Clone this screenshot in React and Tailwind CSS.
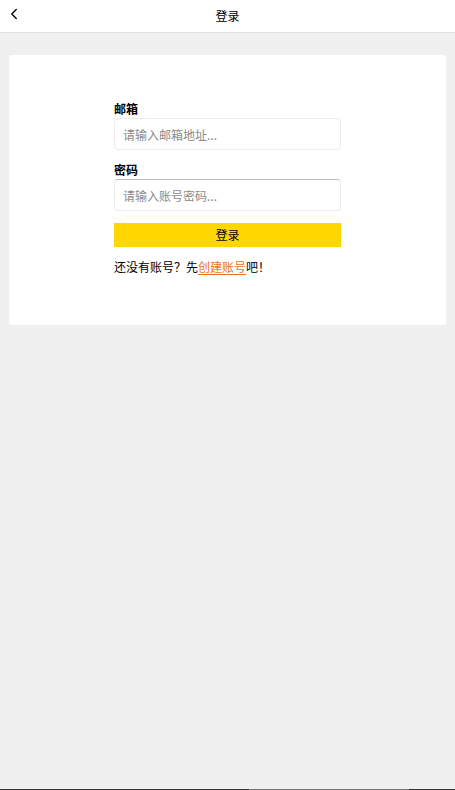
import { ChevronLeft } from 'lucide-react';

const App = () => {
  return (
    <div className="min-h-[790px] bg-[#f0f0f0] flex flex-col font-['Noto_Sans_CJK_SC','Noto_Sans',sans-serif] text-[12px] text-black">
      {/* Header */}
      <div className="relative h-[32px] bg-white flex items-center justify-center shadow-[0_1px_1px_rgba(0,0,0,0.06)]">
        <button className="absolute left-[5px] top-[5px] text-black">
          <ChevronLeft size={18} strokeWidth={1.8} />
        </button>
        <span className="text-[12px]">登录</span>
      </div>

      <div className="flex-1 px-[9px] pt-[23px]">
        <div className="bg-white rounded-[2px] h-[270px] flex justify-center pt-[45px]">
          <div className="w-[227px] flex flex-col">
            <label className="font-bold leading-[17px]">邮箱</label>
            <input
              type="text"
              placeholder="请输入邮箱地址..."
              className="mt-px h-[32px] px-[8px] rounded-[4px] border border-[#ececec] text-[12px] placeholder:text-[#8a8a8a] outline-none"
            />
            <label className="mt-[11px] font-bold leading-[17px]">密码</label>
            <input
              type="password"
              placeholder="请输入账号密码..."
              className="mt-px h-[32px] px-[8px] rounded-[4px] border border-[#ececec] border-t-[#bdbdbd] text-[12px] placeholder:text-[#8a8a8a] outline-none"
            />
            <button className="mt-[12px] h-[24px] bg-[#ffd700] text-[12px] leading-[24px]">登录</button>
            <p className="mt-[11px] leading-[18px]">
              还没有账号？先<a href="#" className="text-[#e8731c] underline underline-offset-2">创建账号</a>吧！
            </p>
          </div>
        </div>
      </div>

      <div className="h-px flex">
        <div className="w-[249px] bg-[#333]" />
        <div className="w-[160px] bg-[#777]" />
        <div className="flex-1 bg-[#333]" />
      </div>
    </div>
  );
};

export default App;
